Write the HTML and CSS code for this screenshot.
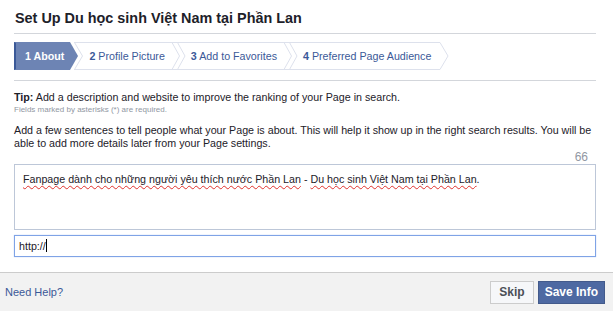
FILE: index.html
```html
<!DOCTYPE html>
<html>
<head>
    <meta charset="utf-8">
    <link rel="stylesheet" href="styles.css">
</head>
<body>
    <div class="dialog">
        <div class="content">
            <h2 class="title">Set Up Du học sinh Việt Nam tại Phần Lan</h2>
            <div class="stepsWrap">
                <div class="steps">
                    <div class="step active"><b>1</b> About</div>
                    <svg class="sep" width="14" height="28" viewBox="0 0 14 28">
                        <polygon points="0,0 8,14 0,28" fill="#6d84b4"/>
                        <polyline points="4.5,0.5 12.5,14 4.5,27.5" fill="none" stroke="#dde1ec"/>
                        <line x1="4" y1="0.5" x2="14" y2="0.5" stroke="#dde1ec"/>
                        <line x1="4" y1="27.5" x2="14" y2="27.5" stroke="#dde1ec"/>
                    </svg>
                    <div class="step"><b>2</b> Profile Picture</div>
                    <svg class="sep" width="14" height="28" viewBox="0 0 14 28">
                        <polyline points="0,0.5 7.5,14 0,27.5" fill="none" stroke="#dde1ec"/>
                        <polyline points="5.5,0.5 13,14 5.5,27.5" fill="none" stroke="#dde1ec"/>
                        <line x1="0" y1="0.5" x2="14" y2="0.5" stroke="#dde1ec"/>
                        <line x1="0" y1="27.5" x2="14" y2="27.5" stroke="#dde1ec"/>
                    </svg>
                    <div class="step"><b>3</b> Add to Favorites</div>
                    <svg class="sep" width="14" height="28" viewBox="0 0 14 28">
                        <polyline points="0,0.5 7.5,14 0,27.5" fill="none" stroke="#dde1ec"/>
                        <polyline points="5.5,0.5 13,14 5.5,27.5" fill="none" stroke="#dde1ec"/>
                        <line x1="0" y1="0.5" x2="14" y2="0.5" stroke="#dde1ec"/>
                        <line x1="0" y1="27.5" x2="14" y2="27.5" stroke="#dde1ec"/>
                    </svg>
                    <div class="step last"><b>4</b> Preferred Page Audience</div>
                    <svg class="sep" width="9" height="28" viewBox="0 0 9 28">
                        <polyline points="0,0.5 8,14 0,27.5" fill="none" stroke="#dde1ec"/>
                    </svg>
                </div>
            </div>
            <div class="form">
                <p class="tip"><b>Tip:</b> Add a description and website to improve the ranking of your Page in search.</p>
                <p class="required">Fields marked by asterisks (*) are required.</p>
                <p class="intro">Add a few sentences to tell people what your Page is about. This will help it show up in the right search results. You will be able to add more details later from your Page settings.</p>
                <div class="counter">66</div>
                <div class="textBox"><span class="spell">Fanpage dành cho những người yêu thích nước Phần Lan</span> - <span class="spell">Du học sinh Việt Nam tại Phần Lan</span>.</div>
                <div class="urlBox">http://<span class="caret"></span></div>
            </div>
        </div>
        <div class="footer">
            <a class="help" href="#">Need Help?</a>
            <div class="buttons">
                <button class="btn skip">Skip</button>
                <button class="btn save">Save Info</button>
            </div>
        </div>
    </div>
</body>
</html>
```

FILE: styles.css
```css
body
{
    margin: 0;
    background-color: #fff;
    font-family: "Liberation Sans", Arial, sans-serif;
    color: #1d2129;
}
.dialog
{
    width: 613px;
    height: 311px;
    display: flex;
    flex-direction: column;
}
.content
{
    flex: 1;
    padding: 0 17px 0 14px;
}
.title
{
    margin: 0;
    padding: 10px 0 7px 1px;
    font-size: 14.4px;
    line-height: 16px;
    font-weight: bold;
    color: #1d2129;
    border-bottom: 1px solid #d3d6db;
}
.stepsWrap
{
    padding: 8px 0 10px 0;
    border-bottom: 1px solid #d3d6db;
}
.steps
{
    display: flex;
    height: 28px;
}
.step
{
    box-sizing: border-box;
    height: 28px;
    padding: 0 7px 0 5px;
    border-top: 1px solid #dde1ec;
    border-bottom: 1px solid #dde1ec;
    font-size: 10.7px;
    line-height: 26px;
    color: #3b5998;
    white-space: nowrap;
}
.step.active
{
    background-color: #6d84b4;
    border-color: #6d84b4;
    border-left: 2px solid #3b5998;
    color: #fff;
    font-weight: bold;
    padding: 0 6px 0 9px;
}
.step.last
{
    padding-right: 9px;
}
.sep
{
    display: block;
    flex: none;
}
.form p
{
    margin: 0;
}
.tip
{
    margin-top: 10px !important;
    font-size: 10.7px;
    line-height: 13px;
}
.required
{
    font-size: 8px;
    line-height: 11px;
    color: #9197a3;
}
.intro
{
    margin-top: 9px !important;
    font-size: 10.7px;
    line-height: 13px;
}
.counter
{
    text-align: right;
    padding-right: 8px;
    font-size: 12px;
    line-height: 14px;
    color: #9197a3;
}
.textBox
{
    box-sizing: border-box;
    height: 66px;
    padding: 7px 8px;
    border: 1px solid #bdc7d8;
    font-size: 10.7px;
    line-height: 14px;
}
.spell
{
    text-decoration: underline wavy #e0322d;
    text-decoration-thickness: 1px;
    text-underline-offset: 2px;
}
.urlBox
{
    box-sizing: border-box;
    height: 22px;
    margin-top: 5px;
    padding: 0 4px;
    border: 1px solid #7fa3e6;
    box-shadow: 0 0 1px #a9c2f0;
    font-size: 10.7px;
    line-height: 20px;
}
.caret
{
    display: inline-block;
    width: 1px;
    height: 13px;
    background-color: #000;
    vertical-align: -2px;
}
.footer
{
    height: 38px;
    border-top: 1px solid #ccc;
    background-color: #f2f2f2;
    display: flex;
    align-items: center;
    justify-content: space-between;
    padding: 0 8px 0 5px;
}
.help
{
    font-size: 11px;
    color: #3b5998;
    text-decoration: none;
}
.buttons
{
    display: flex;
    gap: 4px;
}
.btn
{
    box-sizing: border-box;
    height: 23px;
    padding: 0 6px;
    font-family: "Liberation Sans", Arial, sans-serif;
    font-size: 12px;
    font-weight: bold;
    border: 1px solid #ccc;
}
.skip
{
    padding: 0 8px;
    background-color: #f6f7f9;
    color: #4b4f56;
}
.save
{
    background-color: #4e69a2;
    border-color: #435a8b;
    color: #fff;
}
```
